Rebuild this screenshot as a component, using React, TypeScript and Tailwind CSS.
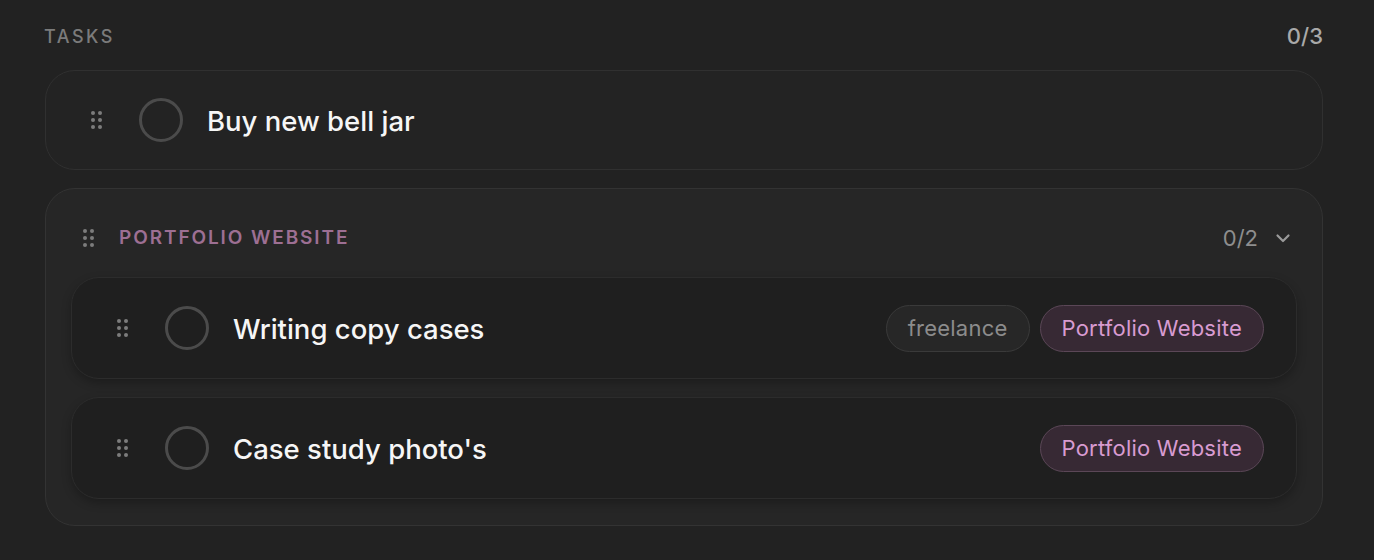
import React from "react";

const font = { fontFamily: "Inter, 'Noto Sans', sans-serif" };

function Handle() {
  return (
    <div className="grid grid-cols-2 gap-x-[3px] gap-y-[3px] w-[11px] shrink-0">
      {Array.from({ length: 6 }).map((_, i) => (
        <span key={i} className="w-[4px] h-[4px] rounded-full bg-[#7c7c7c]" />
      ))}
    </div>
  );
}

function Circle() {
  return <div className="w-[44px] h-[44px] rounded-full border-[3px] border-[#4b4b4b] shrink-0" />;
}

function Pill({ label, kind }: { label: string; kind: "gray" | "pink" }) {
  return kind === "gray" ? (
    <span className="h-[47px] px-[21px] flex items-center rounded-full bg-[#272727] border-[1.5px] border-[#3a3a3a] text-[#8c8c8c] text-[22px] tracking-[0.01em]">
      {label}
    </span>
  ) : (
    <span className="h-[47px] px-[21px] flex items-center rounded-full bg-[#372934] border-[1.5px] border-[#5b4757] text-[#d89bd1] text-[22px] tracking-[0.01em]">
      {label}
    </span>
  );
}

function InnerTask({ title, tags }: { title: string; tags: { label: string; kind: "gray" | "pink" }[] }) {
  return (
    <div className="h-[102px] rounded-[28px] bg-[#1f1f1f] border border-[#2c2c2c] shadow-[0_4px_10px_rgba(0,0,0,0.25)] flex items-center pl-[45px] pr-[32px]">
      <Handle />
      <div className="ml-[37px]"><Circle /></div>
      <span className="ml-[24px] mt-[3px] text-[27.5px] font-medium text-[#f6f6f6]">{title}</span>
      <div className="ml-auto flex items-center gap-[10px]">
        {tags.map((t) => (
          <Pill key={t.label} label={t.label} kind={t.kind} />
        ))}
      </div>
    </div>
  );
}

export default function App() {
  return (
    <div className="w-[1374px] h-[560px] bg-[#222222] pl-[45px] pr-[51px] pt-[21px] text-white" style={font}>
      <div className="h-[30px] flex items-center justify-between">
        <span className="text-[18px] font-medium tracking-[0.14em] text-[#7b7b7b] -ml-[1px]">TASKS</span>
        <span className="text-[22px] font-medium text-[#a9a9a9]">0/3</span>
      </div>
      <div className="mt-[19px] h-[100px] rounded-[30px] bg-[#232323] border border-[#303030] flex items-center pl-[45px]">
        <Handle />
        <div className="ml-[37px]"><Circle /></div>
        <span className="ml-[24px] mt-[3px] text-[27.5px] font-medium text-[#f6f6f6]">Buy new bell jar</span>
      </div>
      <div className="mt-[18px] rounded-[30px] bg-[#262626] border border-[#333333] px-[25px] pt-[24px] pb-[26px]">
        <div className="h-[50px] flex items-center pl-[12px] pr-[2px]">
          <Handle />
          <span className="ml-[25px] text-[19px] font-semibold tracking-[0.1em] text-[#9d6f93]">PORTFOLIO WEBSITE</span>
          <span className="ml-auto text-[22px] text-[#8e8e8e]">0/2</span>
          <svg className="ml-[13px]" width="24" height="24" viewBox="0 0 24 24" fill="none" stroke="#9a9a9a" strokeWidth="2.2" strokeLinecap="round" strokeLinejoin="round">
            <path d="m6.5 9.5 5.5 5.5 5.5-5.5" />
          </svg>
        </div>
        <div className="mt-[14px] flex flex-col gap-[18px]">
          <InnerTask
            title="Writing copy cases"
            tags={[
              { label: "freelance", kind: "gray" },
              { label: "Portfolio Website", kind: "pink" },
            ]}
          />
          <InnerTask title="Case study photo's" tags={[{ label: "Portfolio Website", kind: "pink" }]} />
        </div>
      </div>
    </div>
  );
}
